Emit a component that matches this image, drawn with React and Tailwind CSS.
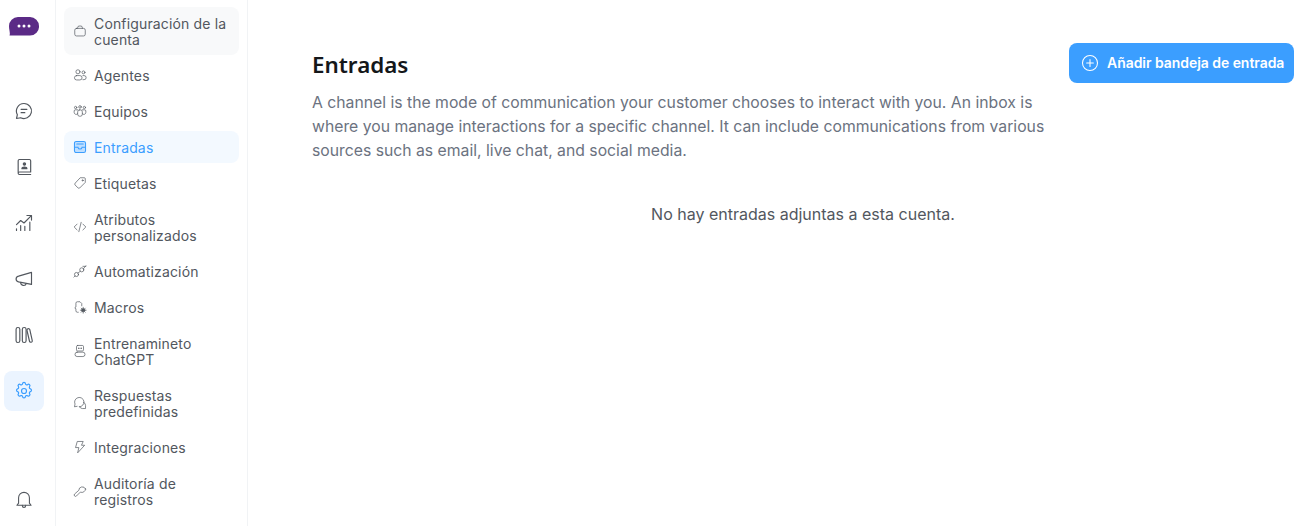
import React from "react";

const Svg = ({ className, sw = 1.5, children }) => (
  <svg viewBox="0 0 24 24" fill="none" stroke="currentColor" strokeWidth={sw} strokeLinecap="round" strokeLinejoin="round" className={className}>
    {children}
  </svg>
);

const Chat = (p) => (
  <Svg {...p}>
    <path d="M12 3a9 9 0 1 1-4 17.05L3 21l1.05-4.6A9 9 0 0 1 12 3Z" />
    <path d="M8.5 10h7M8.5 14h4.5" />
  </Svg>
);
const Contact = (p) => (
  <Svg {...p}>
    <path d="M5 18.5V4.5A1.5 1.5 0 0 1 6.5 3h12A1.5 1.5 0 0 1 20 4.5V18H6.5A1.5 1.5 0 0 0 5 19.5 1.5 1.5 0 0 0 6.5 21H20" />
    <circle cx="12.5" cy="8.5" r="1.4" fill="currentColor" />
    <path d="M9.5 14c0-1.4 1.3-2 3-2s3 .6 3 2Z" fill="currentColor" />
  </Svg>
);
const Analytics = (p) => (
  <Svg {...p}>
    <path d="M3 21v-2M8 21v-6M13 21v-5M19 21V11" />
    <path d="M3 14l5-5 4 3 8.5-8.5" />
    <path d="M15.5 3H21v5.5" />
  </Svg>
);
const Horn = (p) => (
  <Svg {...p}>
    <path d="M21 4v14.5L5.5 15.5C3.5 15 2.5 13.5 2.5 12s1-3 3-3.5Z" />
    <path d="M8 16.2a3.5 3.5 0 0 0 6.8 1.2" />
  </Svg>
);
const Books = (p) => (
  <Svg {...p}>
    <rect x="2.5" y="3" width="4.5" height="18" rx="2.2" />
    <rect x="10" y="3" width="4.5" height="18" rx="2.2" />
    <path d="M16.6 4.6c.7-.4 1.8-.2 2.3.7l3 13.4c.2 1-.3 1.8-1.2 2-.9.2-1.9-.3-2.1-1.2L15.6 6.6c-.2-.9.3-1.6 1-2Z" />
  </Svg>
);
const Gear = (p) => (
  <Svg {...p}>
    <circle cx="12" cy="12" r="3" />
    <path d="M10.3 3.3a1.7 1.7 0 0 1 3.4 0 1.7 1.7 0 0 0 2.6 1.1 1.7 1.7 0 0 1 2.4 2.4 1.7 1.7 0 0 0 1 2.6 1.7 1.7 0 0 1 0 3.3 1.7 1.7 0 0 0-1 2.6 1.7 1.7 0 0 1-2.4 2.4 1.7 1.7 0 0 0-2.6 1 1.7 1.7 0 0 1-3.4 0 1.7 1.7 0 0 0-2.6-1 1.7 1.7 0 0 1-2.4-2.4 1.7 1.7 0 0 0-1-2.6 1.7 1.7 0 0 1 0-3.3 1.7 1.7 0 0 0 1-2.6 1.7 1.7 0 0 1 2.4-2.4 1.7 1.7 0 0 0 2.6-1.1Z" />
  </Svg>
);
const BellI = (p) => (
  <Svg {...p}>
    <path d="M5.500 17V10.500a6.500 6.500 0 0 1 13 0V17l2 2.500h-17Z" />
    <path d="M10 19.500v.5a2 2 0 0 0 4 0v-.5" />
  </Svg>
);

const Brief = (p) => (
  <Svg {...p}>
    <rect x="3" y="7.5" width="18" height="13" rx="3" />
    <path d="M8 7.5V6a2.5 2.5 0 0 1 2.5-2.5h3A2.5 2.5 0 0 1 16 6v1.5" />
  </Svg>
);
const People = (p) => (
  <Svg {...p}>
    <circle cx="8.5" cy="6.5" r="3.5" />
    <circle cx="18" cy="7.5" r="2.5" />
    <rect x="2.5" y="13" width="13" height="7.5" rx="3.7" />
    <path d="M17 13h2a3 3 0 0 1 0 7h-2" />
  </Svg>
);
const Team = (p) => (
  <Svg {...p}>
    <circle cx="12" cy="5" r="2.2" />
    <circle cx="4.5" cy="6" r="2" />
    <circle cx="19.5" cy="6" r="2" />
    <rect x="8" y="10" width="8" height="11" rx="3.5" />
    <path d="M8 10H4a2 2 0 0 0-2 2v2.5a3.5 3.5 0 0 0 6 2.3M16 10h4a2 2 0 0 1 2 2v2.5a3.5 3.5 0 0 1-6 2.3" />
  </Svg>
);
const Tray = (p) => (
  <svg viewBox="0 0 24 24" className={p.className}>
    <rect x="2.5" y="2.5" width="19" height="19" rx="3" fill="currentColor" fillOpacity=".28" stroke="currentColor" strokeWidth="1.8" />
    <path d="M6.5 7h11" stroke="currentColor" strokeWidth="1.8" strokeLinecap="round" />
    <path d="M3 12.5h5.5c.4 2 1.7 3 3.5 3s3.1-1 3.5-3H21" fill="none" stroke="currentColor" strokeWidth="1.8" />
  </svg>
);
const TagI = (p) => (
  <Svg {...p}>
    <path d="M13 3h6.5A1.5 1.5 0 0 1 21 4.500V11L11.500 20.500a2 2 0 0 1-2.800 0l-5.200-5.200a2 2 0 0 1 0-2.800Z" />
    <circle cx="16.500" cy="7.500" r="1" />
  </Svg>
);
const Code = (p) => (
  <Svg {...p}>
    <path d="M7 7l-5 5 5 5M17 7l5 5-5 5M14 4l-4 16" />
  </Svg>
);
const Auto = (p) => (
  <Svg {...p}>
    <circle cx="6" cy="18" r="3.500" />
    <circle cx="15" cy="10" r="3.500" />
    <path d="M1.500 22.500l2-2M8.500 15.500l4-3M18 8l4-5M17 4h5" />
  </Svg>
);
const Macro = (p) => (
  <Svg {...p}>
    <path d="M9 21H7.500a2.500 2.500 0 0 1-2.500-2.500V15l-2-1.500L5 12V5.500A2.500 2.500 0 0 1 7.500 3H12l3 3v4" />
    <circle cx="17.500" cy="17.500" r="2.800" fill="currentColor" />
    <path d="M17.500 12.500v2M17.500 20.500v2M12.500 17.500h2M20.500 17.500h2M14 14l1.400 1.400M19.600 19.600l1.400 1.400M21 14l-1.400 1.400M15.400 19.600 14 21" />
  </Svg>
);
const Robot = (p) => (
  <Svg {...p}>
    <rect x="6" y="2.500" width="12" height="9.500" rx="2" />
    <path d="M10 7v.5M14 7v.5" strokeWidth="2.200" />
    <rect x="3.500" y="14" width="17" height="7.500" rx="3.500" />
  </Svg>
);
const Bubbles = (p) => (
  <Svg {...p}>
    <path d="M11 18.500a8 8 0 1 0-7.500-4.700L2.500 18.500l4.500-.8" />
    <path d="M17.800 10.500a6 6 0 0 1 3.700 5.500v5.500H16a6 6 0 0 1-5-3" />
  </Svg>
);
const Bolt = (p) => (
  <Svg {...p}>
    <path d="M8 2.500h9.500L14.500 9H20L8 22l2-9H5Z" />
  </Svg>
);
const Key = (p) => (
  <Svg {...p} sw={1.200}>
    <path d="M21.500 8.500a6 6 0 0 1-8.800 5.300L6 20.500a2.300 2.300 0 0 1-3.300-3.300L10 10.800A6 6 0 0 1 21.500 8.500Z" />
  </Svg>
);
const PlusCircle = (p) => (
  <Svg {...p}>
    <circle cx="12" cy="12" r="10" />
    <path d="M12 7.500v9M7.500 12h9" />
  </Svg>
);

const Logo = () => (
  <svg viewBox="0 0 30 19" className="h-[19px] w-[30px]">
    <path d="M9 0h12a9 9 0 0 1 9 9 9 9 0 0 1-9 9.500H0.500C1.500 16 0 13 0 9a9 9 0 0 1 9-9Z" fill="#5b2a86" />
    <circle cx="10" cy="9" r="1.500" fill="#fff" />
    <circle cx="15" cy="9" r="1.500" fill="#fff" />
    <circle cx="20" cy="9" r="1.500" fill="#fff" />
  </svg>
);

const rail = [Chat, Contact, Analytics, Horn, Books];

const items = [
  { icon: Brief, label: "Configuración de la cuenta", tall: true, muted: true },
  { icon: People, label: "Agentes" },
  { icon: Team, label: "Equipos" },
  { icon: Tray, label: "Entradas", active: true },
  { icon: TagI, label: "Etiquetas" },
  { icon: Code, label: "Atributos personalizados", tall: true },
  { icon: Auto, label: "Automatización" },
  { icon: Macro, label: "Macros" },
  { icon: Robot, label: "Entrenamineto ChatGPT", tall: true },
  { icon: Bubbles, label: "Respuestas predefinidas", tall: true },
  { icon: Bolt, label: "Integraciones" },
  { icon: Key, label: "Auditoría de registros", tall: true },
];

export default function App() {
  return (
    <div className="flex h-[526px] w-[1306px] overflow-hidden bg-white font-['Inter','Noto_Sans',sans-serif]">
      <aside className="flex w-[56px] shrink-0 flex-col border-r border-[#f1f3f5] pt-[17px] pb-[7px] pl-1 text-[#52575e]">
        <div className="pl-[5px]">
          <Logo />
        </div>
        <div className="mt-[55px] flex flex-col gap-4">
          {rail.map((I, i) => (
            <div key={i} className="flex h-10 w-10 items-center justify-center">
              <I className="h-5 w-5" sw={1.4} />
            </div>
          ))}
          <div className="flex h-10 w-10 items-center justify-center rounded-lg bg-[#ebf4ff] text-[#3b9eff]">
            <Gear className="h-5 w-5" sw={1.4} />
          </div>
        </div>
        <div className="mt-auto flex h-10 w-10 items-center justify-center">
          <BellI className="h-5 w-5" sw={1.3} />
        </div>
      </aside>

      <nav className="flex w-[192px] shrink-0 flex-col gap-1 border-r border-[#f1f3f5] px-2 pt-[7px]">
        {items.map(({ icon: I, label, tall, active, muted }) => (
          <div
            key={label}
            className={`flex items-center gap-[7px] rounded-lg pl-[9px] pr-1 text-sm leading-4 tracking-[0.15px] ${tall ? "h-12" : "h-8"} ${
              active ? "bg-[#f3f9ff] text-[#3b9eff]" : muted ? "bg-[#f8f9fa] text-[#52575e]" : "text-[#52575e]"
            }`}
          >
            <I className="h-3.5 w-3.5 shrink-0" sw={1.2} />
            <span className="pt-[2px]">{label}</span>
          </div>
        ))}
      </nav>

      <main className="flex min-w-0 flex-1 flex-col pl-[64px] pr-3 pt-[44px]">
        <div className="flex items-start justify-between">
          <div className="w-[742px]">
            <h1 className="h-[42px] font-['Noto_Sans',sans-serif] text-[22.4px] leading-[42px] font-semibold text-[#14171a]">Entradas</h1>
            <p className="mt-[5px] text-[15.75px] leading-6 text-[#6b7280]">
              A channel is the mode of communication your customer chooses to interact with you. An inbox is where you manage interactions for a specific channel. It can include communications from various sources such as email, live chat, and social media.
            </p>
          </div>
          <button className="-mt-px flex h-10 w-[225px] items-center gap-2 rounded-lg bg-[#3b9eff] pl-[12px] text-sm font-semibold tracking-[-0.05px] text-white">
            <PlusCircle className="h-[18px] w-[18px]" sw={1.4} />
            <span>Añadir bandeja de entrada</span>
          </button>
        </div>
        <p className="mt-[39px] w-[982px] text-center text-base leading-6 text-[#52575e]">No hay entradas adjuntas a esta cuenta.</p>
      </main>
    </div>
  );
}
